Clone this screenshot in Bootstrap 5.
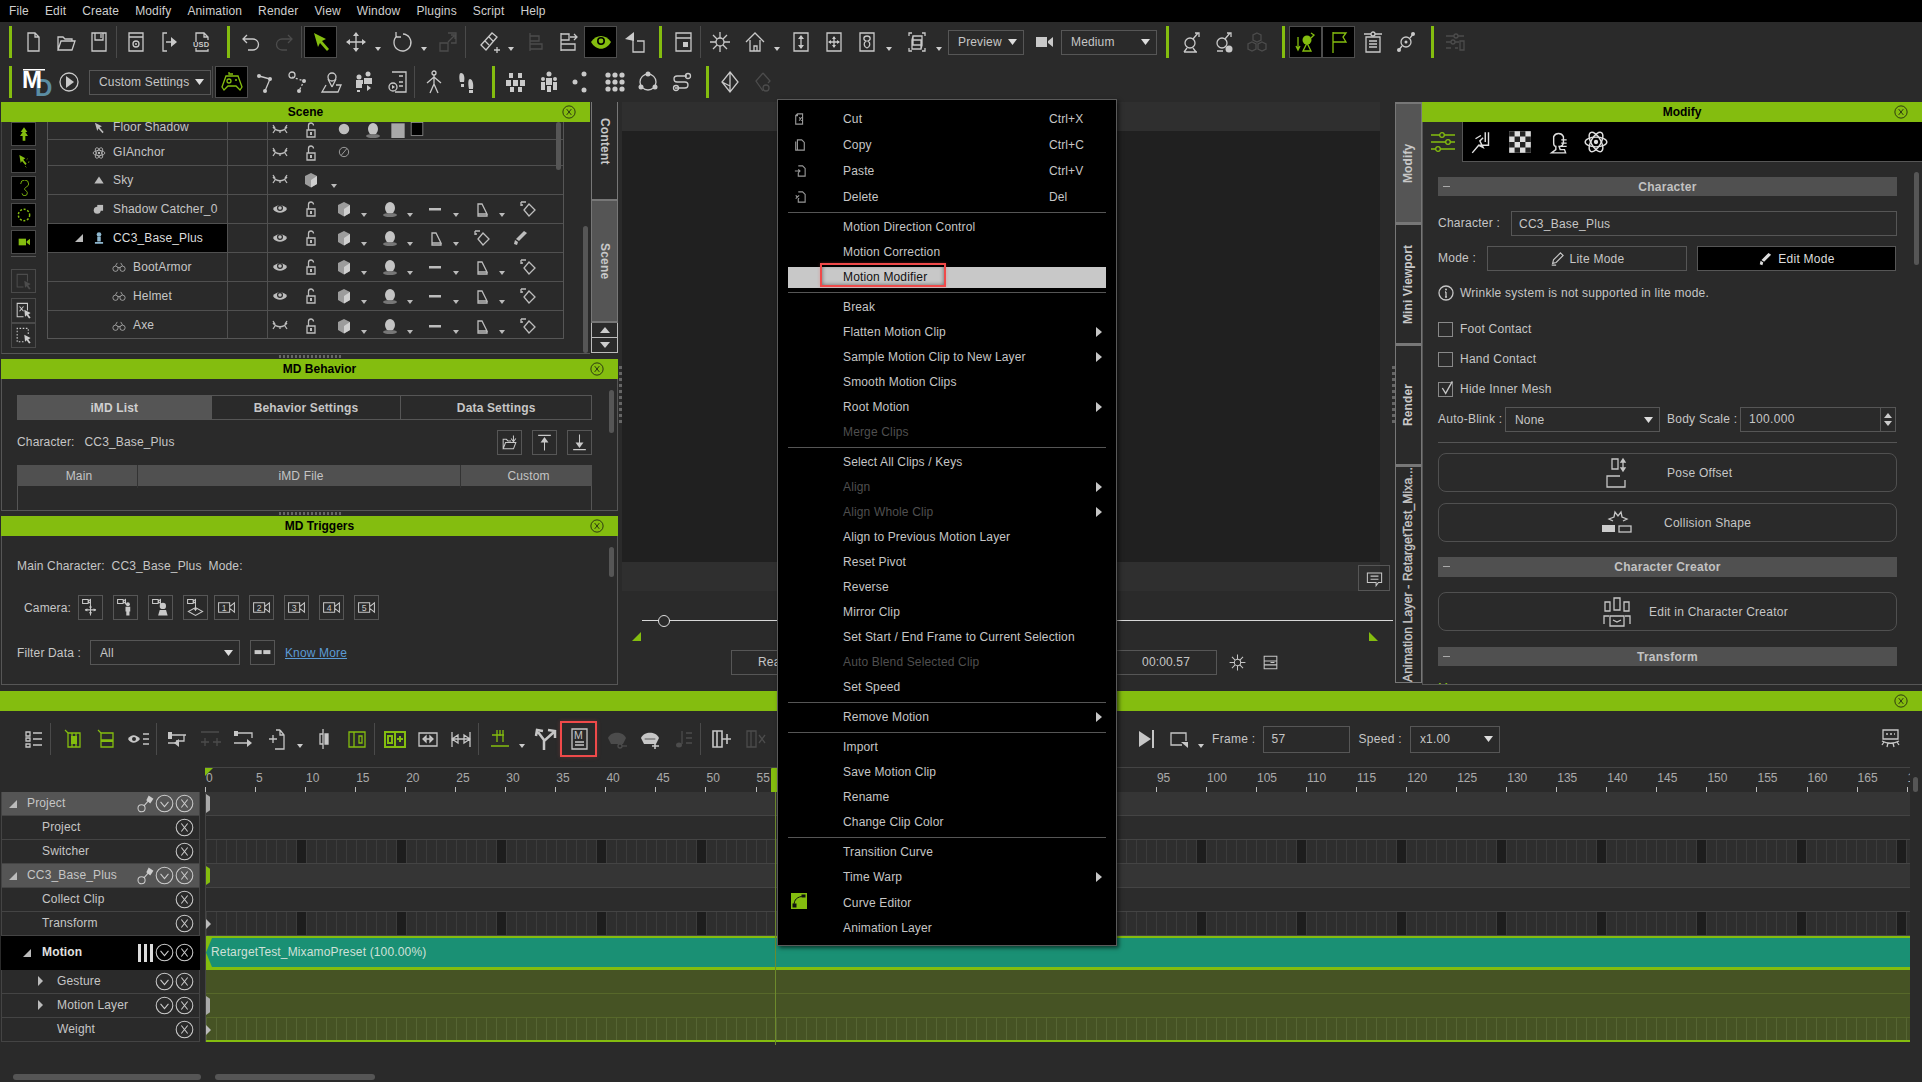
<!DOCTYPE html>
<html lang="en">
<head>
<meta charset="utf-8">
<title>Motion Modifier</title>
<link href="https://cdn.jsdelivr.net/npm/bootstrap@5.3.0/dist/css/bootstrap.min.css" rel="stylesheet">
<style>
:root{--acc:#84bd0f;--txt:#c6c6c6;--ln:#565656;--pane:#2a2a2a}
html,body{margin:0;height:1082px;overflow:hidden}
body{width:1922px;background:var(--pane);color:var(--txt);font:12px/1.2 "Liberation Sans",Arial,sans-serif;letter-spacing:.15px;position:relative}
.ic{width:24px;height:24px;fill:none;stroke:currentColor;stroke-width:1.3;display:block}
.ic16{width:16px;height:16px}
.ic14{width:14px;height:14px}
.ic18{width:19px;height:19px}
.fl{fill:currentColor;stroke:none}
.appmenu{height:22px;background:#000;padding-left:9px;gap:16px;color:#cfcfcf}
.tbar{height:40px;color:#c9c9c9}
.tb{width:33px;height:32px;display:flex;align-items:center;justify-content:center;flex:none}
.tb.act{background:#000;box-shadow:inset 0 0 0 1px #4d4d4d}
.tb.dim{color:#4c4c4c}
.tb.grn{color:var(--acc)}
.gbar{width:3px;height:32px;margin:0 4px 0 9px;background:var(--acc);flex:none}
.vsep{width:1px;height:32px;margin:0 2px 0 1px;background:#4a4a4a;flex:none}
.dr{width:13px;height:32px;flex:none;position:relative}
.dr::after,.tn::after{content:"";position:absolute;left:3px;top:21px;border:3px solid transparent;border-top:4px solid #ccc;border-bottom:0}
.g1{margin-left:1px}.g2{margin-left:2px}.g3{margin-left:3px}.g4{margin-left:4px}.g5{margin-left:5px}
.tsel{height:25px;font-size:12px;line-height:1;padding:0 20px 0 9px;background-color:transparent;color:var(--txt);border:1px solid var(--ln);border-radius:0;background-size:9px 6px;background-position:right 6px center;letter-spacing:.15px;flex:none;
background-image:url("data:image/svg+xml,%3csvg xmlns='http://www.w3.org/2000/svg' viewBox='0 0 9 6'%3e%3cpath fill='%23ddd' d='M0 0h9L4.5 6z'/%3e%3c/svg%3e")}
.w-prev{width:76px;margin-left:2px}.w-med{width:96px;margin-left:1px}.w-cust{width:122px;margin-left:4px}
.logo{width:30px;height:32px;margin-left:6px;flex:none}
.main{height:589px}
.lcol{width:618px;flex:none;padding-left:1px;position:relative}
.ptitle{height:20px;background:var(--acc);color:#000;font-weight:700;padding:1px 0 0 20px;position:relative;flex:none;letter-spacing:0}
.pclose{position:absolute;right:14px;top:3px;color:#111}
.scene{height:252px}
.sleft{width:589px;flex:none}
.sbody{height:232px;position:relative;border-bottom:1px solid var(--ln);border-left:1px solid #444}
.strip{width:45px;padding:0 0 0 9px;flex:none}
.sb{width:25px;height:24px;margin-bottom:3px;background:#000;box-shadow:inset 0 0 0 1px #4a4a4a;color:var(--acc);display:flex;align-items:center;justify-content:center}
.sb.off{background:transparent;color:#ccc;height:25px;margin:0}
.sb.offd{background:transparent;color:#4c4c4c;height:24px;margin:12px 0 5px}
.stripline{height:1px;background:#555;width:25px;margin:-1px 0 12px}
.stable{width:517px;border:solid var(--ln);border-width:0 1px 1px 1px;height:217px;overflow:hidden;flex:none}
.srow{display:grid;grid-template-columns:180px 40px 285px;border-bottom:1px solid #505050}
.srow:last-child{border-bottom:0}
.h26{height:26px}.h29{height:29px}
.srow.h18{height:18px;grid-template-rows:11px;overflow:hidden}
.sname{display:flex;align-items:center;border-right:1px solid #505050;height:100%;position:relative}
.h18 .sname,.h18 .sgap{border-right-color:transparent}
.h18{background:linear-gradient(#505050,#505050) 179px 0/1px 100% no-repeat,linear-gradient(#505050,#505050) 219px 0/1px 100% no-repeat}
.sgap{border-right:1px solid #505050;height:100%}
.sico{position:absolute;left:44px;top:50%;margin-top:-7px;color:#bbb}
.sico.sub{left:64px}
.stxt{margin-left:65px}
.stxt.sub{margin-left:85px}
.sel{background:#000;color:#ddd}
.cccol{color:#8fb8d0}
.fx{display:grid;grid-template-columns:24px 37px 30px 10px 36px 10px 36px 10px 36px 10px 36px;align-items:center;height:100%;color:#bdbdbd}
.fx.fs{grid-template-columns:24px 37px 30px 6px 16px 9px 16px 4px 14px}
.fx>span{display:flex;justify-content:center;position:relative;height:16px}
.fx:not(.fs)>span:nth-child(5),.fx:not(.fs)>span:nth-child(7),.fx:not(.fs)>span:nth-child(9),.fx:not(.fs)>span:nth-child(11){padding-left:5px}
.fx>.jb{justify-content:flex-start}
.tn{width:10px}
.tn::after{left:2px;top:12px;border-top-color:#bbb}
.vtabs{width:27px;flex:none;margin-left:1px}
.vt{writing-mode:vertical-rl;width:27px;font-weight:700;color:#c8c8c8;border:1px solid #777;border-width:0 1px 2px 1px;display:flex;align-items:center;letter-spacing:.2px}
.vt.cont{height:99px;padding-top:16px}
.vt.scn{height:122px;background:#555;justify-content:center;padding-top:0}
.va{height:15px;border:1px solid #bbb;border-top:0;display:flex;align-items:center;justify-content:center}
.va i{border:5px solid transparent;border-top:0;border-bottom:6px solid #ccc;display:block}
.va.dn i{border-bottom:0;border-top:6px solid #ccc}
.split{height:5px;display:flex;justify-content:center;align-items:center}
.split i{width:62px;height:3px;background:repeating-linear-gradient(90deg,#666 0 2px,transparent 2px 4px);display:block}
.dock{border:1px solid var(--ln);border-top:0;position:relative;overflow:hidden;padding:0 0 0 15px;flex:none}
.behav{height:132px}
.trig{height:149px}
.dtabs{width:575px;height:25px;margin-top:16px;display:flex;font-weight:700;border:1px solid var(--ln)}
.dtabs div{display:flex;align-items:center;justify-content:center;border-left:1px solid var(--ln);padding-top:1px}
.dt1{width:193px;background:#555;color:#d0d0d0;border-left:0!important}.dt2{width:190px}.dt3{width:191px}
.sqb{width:25px;height:25px;border:1px solid var(--ln);display:flex;align-items:center;justify-content:center;flex:none;color:#c8c8c8}
.ms10{margin-left:10px}
.charrow{width:575px;height:25px;margin-top:10px}
.cname{margin-left:10px}
.dhead{width:575px;height:21px;margin-top:10px;background:#505050;display:grid;grid-template-columns:120px 323px 1fr;text-align:center;line-height:23px;color:#c4c4c4}
.dhead div{padding-left:4px}
.dhead div+div{border-left:1px solid #333}
.dempty{width:575px;height:40px;border:solid #555;border-width:0 1px}
.sbar{position:absolute;background:#565656;border-radius:3px;width:5px}
.s1{left:554px;top:0;height:48px}.s2{left:581px;top:104px;height:127px}
.s3{left:607px;top:11px;height:43px}.s4{left:607px;top:11px;height:30px}
.s5{left:491px;top:50px;height:93px}.s6{left:1913px;top:86px;height:15px}
.mainch{margin-top:23px}
.camrow{margin-top:22px;height:25px;padding-left:7px}
.camrow .sqb{margin-left:10px}
.camrow .cfirst{margin-left:7px}
.camrow .cm{margin-left:6px}
.filtrow{height:25px;margin-top:20px}
.fsel{width:150px;margin-left:9px}
.tws{margin-left:10px}
.knw{color:#5b9bd5;text-decoration:underline;margin-left:10px}
.imdcut{margin-top:17px}
.cen{flex:1 1 auto;padding-left:4px;min-width:0;position:relative}
.vtop{height:29px;width:758px;background:#2f2f2f;flex:none}
.vport{height:431px;width:758px;background:#202020;flex:none}
.vband{height:29px;width:758px;background:#2f2f2f;flex:none;padding-top:3px}
.vband .sqb{width:32px;height:26px;margin-left:auto;margin-right:-10px}
.slid{height:100px;position:relative}
.cline{position:absolute;left:20px;right:2px;top:29px;height:1px;background:#d8d8d8}
.cknob{position:absolute;left:36px;top:24px;width:12px;height:12px;border:1px solid #ddd;border-radius:50%;background:#2a2a2a}
.ctrA,.ctrB{position:absolute;top:41px;width:9px;height:9px;background:var(--acc)}
.ctrA{left:10px;clip-path:polygon(100% 0,100% 100%,0 100%)}
.ctrB{left:747px;clip-path:polygon(0 0,100% 100%,0 100%)}
.crea{position:absolute;left:109px;top:59px;width:100px;height:25px;border:1px solid var(--ln);line-height:23px;padding-left:26px}
.ctime{position:absolute;left:490px;top:59px;width:105px;height:25px;border:1px solid var(--ln);line-height:23px;text-align:right;padding-right:26px;border-left:0}
.cicA{position:absolute;left:606px;top:62px}
.cicB{position:absolute;left:639px;top:62px}
.vdots{position:absolute;width:3px;height:57px;top:264px;background:repeating-linear-gradient(#666 0 3px,transparent 3px 6px)}
.vd1{left:1px}.vd2{left:774px}
.rcol{width:527px;flex:none;position:relative}
.rtabs{width:27px;flex:none}
.rt{writing-mode:vertical-rl;transform:rotate(180deg);width:27px;font-weight:700;border:1px solid #777;display:flex;align-items:center;justify-content:center;color:#c8c8c8;height:121px;border-width:1px 1px 2px 1px;white-space:nowrap;overflow:hidden;letter-spacing:.1px}
.rt.on{background:#555}
.rt.anim{height:218px;justify-content:flex-start;font-weight:400;-webkit-text-stroke:.35px #c8c8c8;letter-spacing:.2px}
.rbody{width:500px;flex:none}
.rpanel{height:563px;border:solid var(--ln);border-width:0 0 1px 1px;position:relative;overflow:hidden}
.rtool{height:40px}
.rtact{width:39px;height:40px;display:flex;align-items:center;justify-content:center;color:var(--acc);flex:none}
.rtb{flex:1;background:#000;border:solid var(--ln);border-width:0 0 1px 1px;display:flex;align-items:center}
.rtb .tb{width:38px;color:#e0e0e0}
.rtb .ic{width:26px;height:26px}
.rcont{padding:15px 25px 0 15px}
.sech{height:19px;background:#505050;font-weight:700;color:#c2c2c2;position:relative;display:flex;align-items:center;justify-content:center;letter-spacing:.25px;padding-top:1px}
.sech.tall{height:20px}
.sech i{position:absolute;left:5px;top:9px;width:7px;height:1px;background:#aaa}
.fctl{height:25px;background:transparent;border:1px solid var(--ln);border-radius:0;color:var(--txt);font-size:12px;padding:0 7px;letter-spacing:.25px;flex:1;min-width:0}
.fctl:focus{background:transparent;color:var(--txt)}
.rrow{height:25px;margin-top:15px}
.rrow.r10{margin-top:10px}
.rrow.r3{margin-top:3px}
.r73{width:73px;flex:none}.r49{width:49px;flex:none}.r67{width:67px;flex:none}
.absel{width:155px}
.bsl{width:73px;margin-left:7px;flex:none}
.lab{letter-spacing:.25px;white-space:nowrap}
.modeb{height:25px;width:200px;border:1px solid var(--ln);border-radius:0;color:var(--txt);font-size:12px;padding:0;display:flex;align-items:center;justify-content:center;gap:6px;letter-spacing:.25px}
.modeb.on{background:#000;color:#ddd;width:199px;margin-left:10px}
.ckwrap{margin-top:9px}
.ckline{height:30px;letter-spacing:.25px}
.ckbox{width:15px;height:15px;border:1px solid #888;margin:0 7px 0 0;background:transparent;border-radius:0;flex:none;position:relative}
.ckbox svg{position:absolute;left:0;top:-3px}
.inforow{margin-top:10px;height:24px;gap:6px;letter-spacing:.25px}
.spin{width:15px;height:23px;border-left:1px solid var(--ln);display:flex;flex-direction:column;align-items:center;justify-content:space-around;padding:3px 0}
.spin i{border:4px solid transparent;border-top:0;border-bottom:5px solid #ccc;display:block}
.spin i+i{border-bottom:0;border-top:5px solid #ccc}
.spinwrap{width:156px;height:25px;border:1px solid var(--ln);flex:none}
.spinwrap span{flex:1;padding-left:8px;letter-spacing:.35px}
.hr1{height:1px;background:#555;margin:10px 0}
.bigb{height:39px;border:1px solid #505050;border-radius:8px;color:var(--txt);font-size:12px;padding:0 0 0 162px;display:flex;align-items:center;justify-content:flex-start;letter-spacing:.25px;width:100%}
.bigb svg{width:32px;height:32px}
.gp34{margin-right:34px}.gp31{margin-right:31px}.gp16{margin-right:16px}
.mt11{margin-top:11px}.mt15{margin-top:15px}.mt16{margin-top:16px}
.gt{color:var(--acc)}
.bottom{height:391px;position:relative}
.btool{height:56px}
.b0{width:16px;flex:none}
.hlb{outline:2px solid #f04a4a;box-shadow:0 0 4px 2px rgba(240,74,74,.25);height:32px}
.midg{margin-left:357px}
.bsel{width:90px;height:27px}
.binp{width:87px;height:27px;flex:none;padding-left:7px}
.blab{letter-spacing:.3px}
.ruler{height:25px;margin-left:205px;border-top:1px solid #444;display:flex;overflow:hidden;position:relative;width:1705px}
.tick{width:50.05px;flex:none;padding:3px 0 0 1px;color:#aaa;background:linear-gradient(#bbb,#bbb) left bottom/1px 5px no-repeat;letter-spacing:0;line-height:14px}
.phead{position:absolute;left:566px;top:0;width:7px;height:25px;background:var(--acc);border-radius:1px}
.zero{position:absolute;left:0;top:0;width:8px;height:8px;background:var(--acc);clip-path:polygon(0 0,100% 0,0 100%)}
.tl{position:relative}
.labs{width:199px;flex:none;margin-left:1px}
.lr{height:24px;border:1px solid #444;border-width:0 1px 1px 1px;display:flex;align-items:center;position:relative;white-space:nowrap}
.lr.hd{background:#555}
.lr.mot{height:34px;background:#000;color:#e0e0e0;font-weight:700;border-color:#000}
.lr .t1{margin-left:25px}.lr .t2{margin-left:40px}.lr .t3{margin-left:55px}
.lri{position:absolute;display:block;color:#ccc}
.rA{right:5px;top:2px}.rB{right:25px;top:2px}.rC{right:44px;top:2px}
.mot .rA,.mot .rB{top:7px}
.tr3{position:absolute;width:8px;height:8px;background:#bbb;clip-path:polygon(100% 0,100% 100%,0 100%)}
.tA{left:7px;top:8px}.tB{left:21px;top:13px}
.trs{left:27px;top:10px}
.trR{position:absolute;border:5px solid transparent;border-left:5px solid #bbb;border-right:0}
.tC{left:36px;top:6px}.tD{left:0;top:7px}
.bars{position:absolute;left:136px;top:8px;width:16px;height:18px;background:repeating-linear-gradient(90deg,#ddd 0 3px,transparent 3px 6px)}
.tracks{width:1705px;margin-left:5px;flex:none;border-left:1px solid #444}
.tk{height:24px;border-bottom:1px solid #444;position:relative}
.tk.l{background:#353535}
.tk.m{background:#2c2c2c}
.tk.g{background-image:repeating-linear-gradient(90deg,#3c3c3c 0 1px,transparent 1px 10px),repeating-linear-gradient(90deg,transparent 0 90px,#1d1d1d 90px 100px);background-color:#2e2e2e}
.tk.clip{height:34px;background:var(--acc);padding:2px 0 3px;border:0}
.cinner{height:29px;background:#1a9074;color:#cfe0d8;line-height:29px;padding-left:5px;clip-path:polygon(6px 0,100% 0,100% 100%,6px 100%,0 50%)}
.tk.ol{background:#465324;border-bottom:1px solid #57682a}
.tk.wg{background-color:#465324;background-image:repeating-linear-gradient(90deg,#566534 0 1px,transparent 1px 10px);border-bottom:2px solid var(--acc)}
.mk{position:absolute;left:0;top:2px;width:4px;height:19px;background:#aaa;clip-path:polygon(0 0,100% 15%,100% 85%,0 100%)}
.mk.gm{background:var(--acc)}
.playl{position:absolute;left:775px;top:0;width:1px;background:#6d8a2c;height:253px}
.botbar{position:absolute;height:6px;background:#555;border-radius:3px;top:383px}
.bb1{left:13px;width:188px}.bb2{left:215px;width:160px}
.ctx.dropdown-menu{position:absolute;left:777px;top:99px;width:340px;height:847px;background:#000;border:1px solid #5a5a5a;border-radius:0;padding:6px 10px 0 10px;z-index:5;box-shadow:2px 2px 4px rgba(0,0,0,.6);display:block;margin:0;min-width:0;font-size:12px}
.ctx .dropdown-item{height:25px;padding:0 0 0 55px;color:#c6c6c6;display:flex;align-items:center;position:relative;font-size:12px;letter-spacing:.15px;background:transparent;white-space:nowrap}
.ctx .i26{height:26px}
.ctx .dropdown-item.off{color:#4f4f4f}
.ctx .dropdown-item.sub::after{content:"";position:absolute;right:4px;top:7px;border:5px solid transparent;border-left:6px solid #c6c6c6;border-right:0}
.ctx .dropdown-divider{border-top:1px solid #555;margin:2px 0;opacity:1}
.ctx .ks{position:absolute;left:261px;letter-spacing:.1px}
.ctx .ci{position:absolute;left:6px;top:7px;width:12px;height:12px;color:#999}
.ctx .dropdown-item.hi{background:linear-gradient(#c8c8c8,#c8c8c8) center/100% 21px no-repeat;color:#111}
.ctx .redb{position:absolute;left:32px;top:-2px;width:126px;height:24px;border:2px solid #f04a4a;box-shadow:inset 0 0 4px rgba(0,0,0,.5),0 0 3px rgba(240,74,74,.3)}
.cvb{position:absolute;left:3px;top:3px;width:16px;height:16px;background:var(--acc);color:#111}
</style>
</head>
<body>
<svg width="0" height="0" class="position-absolute">
<symbol id="n" viewBox="0 0 24 24"><path d="M7 3h7l4 4v14H7zM14 3v4h4"/></symbol>
<symbol id="o" viewBox="0 0 24 24"><path d="M4 20V7h5l2 2h7v2M4 20l3-9h14l-3 9z"/></symbol>
<symbol id="s" viewBox="0 0 24 24"><path d="M5 3h14v18H5zM8 3v7h8V3M14 4v4"/></symbol>
<symbol id="p" viewBox="0 0 24 24"><path d="M5 3h14v18H5zM5 7h14"/><circle cx="12" cy="14" r="3"/><circle cx="12" cy="14" r="1" class="fl"/></symbol>
<symbol id="i" viewBox="0 0 24 24"><path d="M10 3H6v18h4M9 12h6"/><path d="M14 7l6 5-6 5z" class="fl"/></symbol>
<symbol id="und" viewBox="0 0 24 24"><path d="M8 5l-4 4 4 4M4 9h10a5 5 0 0 1 0 11H9"/></symbol>
<symbol id="red" viewBox="0 0 24 24"><path d="M16 5l4 4-4 4M20 9H10a5 5 0 0 0 0 11h5"/></symbol>
<symbol id="arw" viewBox="0 0 24 24"><path d="M5 3l12 6-4 2 7 8-2 2-7-8-2 4z" class="fl"/></symbol>
<symbol id="mov" viewBox="0 0 24 24"><path d="M12 3v18M3 12h18"/><path d="M12 2l-3 4h6zM12 22l-3-4h6zM2 12l4-3v6zM22 12l-4-3v6z" class="fl"/></symbol>
<symbol id="rot" viewBox="0 0 24 24"><path d="M7 6a8.500 8.500 0 1 0 6-2M6 2v5h5"/></symbol>
<symbol id="scl" viewBox="0 0 24 24"><path d="M12 3h8v10h-5M4 13h8v8H4zM12 12l6-6M15 5h4v4"/></symbol>
<symbol id="snp" viewBox="0 0 24 24"><path d="M4 15L15 3l5 4L9 20zM8 11l4 4M12 7l4 4M17 20h6M20 17v6"/></symbol>
<symbol id="al1" viewBox="0 0 24 24"><path d="M7 3v18M7 6h9v5H7zM7 14h12v5H7z"/></symbol>
<symbol id="al2" viewBox="0 0 24 24"><path d="M5 3v18M5 4h8v6H5zM5 14h14v6H5zM14 7h7M18 4l3 3-3 3"/></symbol>
<symbol id="eye" viewBox="0 0 24 24"><path d="M2 12c5-8 15-8 20 0-5 9-15 9-20 0z" class="fl"/><circle cx="12" cy="11" r="4" fill="#000" stroke="none"/><circle cx="12" cy="11" r="2.400" class="fl"/></symbol>
<symbol id="rig" viewBox="0 0 24 24"><path d="M11 8v14h11V11H15"/><path d="M3 9l9-7v9z" class="fl"/></symbol>
<symbol id="win" viewBox="0 0 24 24"><path d="M5 3h15v18H5zM5 8h15"/><rect x="12" y="12" width="5" height="5" class="fl"/></symbol>
<symbol id="sun" viewBox="0 0 24 24"><circle cx="12" cy="12" r="4"/><path d="M12 2v6M12 16v6M2 12h6M16 12h6M5 5l4 4M15 15l4 4M19 5l-4 4M9 15l-4 4"/></symbol>
<symbol id="hom" viewBox="0 0 24 24"><path d="M3 12l9-9 9 9M7 10v11h10V10M11 21v-5h3v5"/></symbol>
<symbol id="fv1" viewBox="0 0 24 24"><path d="M5 3h14v18H5zM12 6v12"/><path d="M12 5l-3 4h6zM12 19l-3-4h6z" class="fl"/></symbol>
<symbol id="fv2" viewBox="0 0 24 24"><path d="M5 3h14v18H5zM12 7v10M7 12h10"/><path d="M12 6l-2 3h4zM12 18l-2-3h4zM6 12l3-2v4zM18 12l-3-2v4z" class="fl"/></symbol>
<symbol id="fv3" viewBox="0 0 24 24"><path d="M5 3h14v18H5zM12 6c4 0 4 4 1 5 3 2 2 6-1 7-3-1-4-5-1-7-3-1-3-5 1-5z"/></symbol>
<symbol id="fv4" viewBox="0 0 24 24"><path d="M7 3H4v3M17 3h3v3M7 21H4v-3M17 21h3v-3M8 6h9v9H8zM8 6l-1 4v9h9l1-4M7 10h9v9"/></symbol>
<symbol id="cam" viewBox="0 0 24 24"><path d="M4 7h11v10H4z" class="fl"/><path d="M16 11l5-4v10l-5-4z" class="fl"/></symbol>
<symbol id="bn1" viewBox="0 0 24 24"><circle cx="11" cy="13" r="5"/><path d="M5 22h13M8 18l-3 4M14 18l3 4M14 9l5-6M16 3h4v4"/></symbol>
<symbol id="bn2" viewBox="0 0 24 24"><circle cx="10" cy="13" r="5"/><path d="M5 21h6M13 9l5-6M15 3h4v4"/><circle cx="17" cy="19" r="3.500" class="fl"/></symbol>
<symbol id="cb3" viewBox="0 0 24 24"><path d="M12 3l4 2v5l-4 2-4-2V5zM7 12l4 2v5l-4 2-4-2v-5zM17 12l4 2v5l-4 2-4-2v-5z"/></symbol>
<symbol id="grv" viewBox="0 0 24 24"><circle cx="13" cy="10" r="4.500" class="fl"/><path d="M4 7v12M2 16l2 4 2-4M9 21l4-8 4 8zM17 3l3 2-3 3"/></symbol>
<symbol id="tree" viewBox="0 0 24 24"><path d="M12 2l5 7h-3l4 6h-4v7h-4v-7H6l4-6H7z" class="fl"/></symbol>
<symbol id="sp1" viewBox="0 0 24 24"><path d="M5 3l9 5-3 2 5 6-2 2-5-6-2 3z" class="fl"/><path d="M16 10l2-2M18 14l3-1M14 20l2 2" stroke-dasharray="2 1"/></symbol>
<symbol id="sp2" viewBox="0 0 24 24"><path d="M7 6a6 6 0 0 1 12 0c0 4-5 4-6 7s4 3 4 6a4 4 0 0 1-8 1"/></symbol>
<symbol id="sp3" viewBox="0 0 24 24"><circle cx="12" cy="12" r="8.500" stroke-dasharray="3 2.500" stroke-width="2.200"/></symbol>
<symbol id="bx1" viewBox="0 0 24 24"><path d="M12 19H4V3h13v9"/><path d="M13 11l8 4-3 2 3 4-2 1-3-4-2 2z" class="fl"/></symbol>
<symbol id="bx2" viewBox="0 0 24 24"><path d="M12 20H4V3h13v9M7 7l5 6M12 7l-5 6"/><path d="M13 11l8 4-3 2 3 4-2 1-3-4-2 2z" class="fl"/></symbol>
<symbol id="bx3" viewBox="0 0 24 24"><path d="M12 20H4V3h14v9" stroke-dasharray="2 2"/><path d="M13 11l8 4-3 2 3 4-2 1-3-4-2 2z" class="fl"/></symbol>
<symbol id="flg" viewBox="0 0 24 24"><path d="M6 2v21M6 3h13l-3 4 3 5H6"/></symbol>
<symbol id="lst" viewBox="0 0 24 24"><path d="M5 7h14v15H5zM8 11h8M8 14h8M8 17h8"/><circle cx="12" cy="4" r="2"/><path d="M3 4h7M14 4h7"/></symbol>
<symbol id="bon" viewBox="0 0 24 24"><circle cx="12" cy="12" r="5"/><circle cx="12" cy="12" r="1.500" class="fl"/><path d="M8 16l-4 5M16 8l4-5"/><circle cx="19" cy="4" r="2" class="fl"/><circle cx="5" cy="20" r="2" class="fl"/></symbol>
<symbol id="eqc" viewBox="0 0 24 24"><path d="M3 6h8M15 6h6M3 12h5M12 12h4M3 18h5M12 18h3"/><circle cx="13" cy="6" r="2"/><circle cx="10" cy="12" r="2"/><path d="M17 11h4v9h-4z"/></symbol>
<symbol id="play" viewBox="0 0 24 24"><circle cx="12" cy="12" r="9"/><path d="M9 6l8 6-8 6z" class="fl"/></symbol>
<symbol id="pad" viewBox="0 0 24 24"><path d="M6 6h12l4 11-2 3-4-4H8l-4 4-2-3z"/><circle cx="9" cy="11" r="2"/><circle cx="16" cy="10" r="1" class="fl"/><path d="M9 2v2h4"/></symbol>
<symbol id="pth" viewBox="0 0 24 24"><path d="M6 6l11 3-5 12"/><circle cx="6" cy="6" r="2" class="fl"/><circle cx="17" cy="9" r="2" class="fl"/><circle cx="12" cy="21" r="2" class="fl"/></symbol>
<symbol id="pt2" viewBox="0 0 24 24"><path d="M6 7l12 4-5 10" stroke-dasharray="2 2"/><circle cx="6" cy="5" r="3"/><circle cx="18" cy="11" r="2" class="fl"/><circle cx="13" cy="21" r="2" class="fl"/></symbol>
<symbol id="pin" viewBox="0 0 24 24"><circle cx="13" cy="7" r="4"/><path d="M13 17L9 9M13 17l4-8M7 15l-4 7h16l3-7h-5"/></symbol>
<symbol id="ppl" viewBox="0 0 24 24"><circle cx="16" cy="4" r="2.500" class="fl"/><path d="M12 8h8v6h-8zM4 10h7v4H4zM9 18h9M15 15l4 3-4 3z" class="fl"/><circle cx="7" cy="7" r="2.500" class="fl"/><path d="M4 14h6v4H4zM5 20h3v2H5z" class="fl"/></symbol>
<symbol id="scr" viewBox="0 0 24 24"><path d="M7 2h14v20H10M14 6h4M14 12h4M14 16h4"/><circle cx="8" cy="17" r="4"/><path d="M7 15l3 2-3 2z" class="fl"/></symbol>
<symbol id="man" viewBox="0 0 24 24"><circle cx="12" cy="3" r="2"/><path d="M12 5v9M12 7L5 13M12 7l7 6M12 14l-4 9M12 14l4 9"/></symbol>
<symbol id="ft" viewBox="0 0 24 24"><path d="M6 3c3 0 4 4 3 9H5C4 8 4 3 6 3zM15 9c2 0 4 4 3 10h-4c-1-5-1-10 1-10zM6 14h3v3H6zM14 20h4v3h-4z" class="fl"/></symbol>
<symbol id="grp" viewBox="0 0 24 24"><path d="M5 3h4v5H5zM14 3h4v5h-4zM2 10h5v6H2zM9 10h5v6H9zM16 10h5v6h-5zM6 17h4v5H6zM14 17h4v5h-4z" class="fl"/></symbol>
<symbol id="gr2" viewBox="0 0 24 24"><circle cx="12" cy="4" r="2.500" class="fl"/><path d="M9 8h6v7H9zM10 16h4v6h-4z" class="fl"/><circle cx="6" cy="9" r="2" class="fl"/><circle cx="18" cy="9" r="2" class="fl"/><path d="M4 12h4v8H4zM16 12h4v8h-4z" class="fl"/></symbol>
<symbol id="dts" viewBox="0 0 24 24"><circle cx="14" cy="4" r="2.500" class="fl"/><circle cx="5" cy="12" r="2.500" class="fl"/><circle cx="14" cy="20" r="2.500" class="fl"/></symbol>
<symbol id="grd" viewBox="0 0 24 24"><g class="fl"><circle cx="5" cy="5" r="2.600"/><circle cx="12" cy="5" r="2.600"/><circle cx="19" cy="5" r="2.600"/><circle cx="5" cy="12" r="2.600"/><circle cx="12" cy="12" r="2.600"/><circle cx="19" cy="12" r="2.600"/><circle cx="5" cy="19" r="2.600"/><circle cx="12" cy="19" r="2.600"/><circle cx="19" cy="19" r="2.600"/></g></symbol>
<symbol id="rng" viewBox="0 0 24 24"><circle cx="12" cy="12" r="8"/><circle cx="12" cy="4" r="2.500" class="fl"/><circle cx="5" cy="17" r="2.500" class="fl"/><circle cx="19" cy="17" r="2.500" class="fl"/></symbol>
<symbol id="flo" viewBox="0 0 24 24"><path d="M8 6h10M8 6a3 3 0 0 0 0 6h8a3 3 0 0 1 0 6H6"/><circle cx="7" cy="18" r="2.500"/><circle cx="19" cy="6" r="2.500"/></symbol>
<symbol id="dia" viewBox="0 0 24 24"><path d="M12 2l8 10-8 10-8-10zM12 2v20M4 12l8 4"/></symbol>
<symbol id="dia2" viewBox="0 0 24 24"><path d="M12 3l7 8-2 2M12 3l-7 8 7 10"/><circle cx="15" cy="18" r="3"/></symbol>
<symbol id="xc" viewBox="0 0 24 24"><circle cx="12" cy="12" r="10.500"/><path d="M8 7l8 10M16 7L8 17"/></symbol>
<symbol id="vc" viewBox="0 0 24 24"><circle cx="12" cy="12" r="10.500"/><path d="M7 10l5 6 5-6"/></symbol>
<symbol id="key" viewBox="0 0 24 24"><circle cx="7" cy="18" r="4.500"/><path d="M10 15l7-8"/><path d="M16 2l6 4-4 6-5-4z" class="fl"/></symbol>
<symbol id="eo" viewBox="0 0 16 16"><path d="M1 8c3-5 11-5 14 0-3 5-11 5-14 0z" class="fl"/><circle cx="8" cy="7" r="3" fill="#2a2a2a" stroke="none"/><circle cx="8" cy="7" r="1.800" class="fl"/></symbol>
<symbol id="ec" viewBox="0 0 16 16"><path d="M1 5c4 5 10 5 14 0M3 8L1 11M13 8l2 3M1 3l2 3M15 3l-2 3M8 9v2"/></symbol>
<symbol id="lk" viewBox="0 0 16 16"><path d="M4 8h8v7H4zM5.500 8V3.500a2.500 2.500 0 0 1 5 0"/><rect x="7" y="10" width="2" height="3" class="fl"/></symbol>
<symbol id="cu" viewBox="0 0 16 16"><path d="M8 1l6 3v8l-6 3.500-6-3.500V4z" fill="#9c9c9c" stroke="none"/><path d="M8 8l6-4v8l-6 3.500z" fill="#cfcfcf" stroke="none"/></symbol>
<symbol id="bu" viewBox="0 0 16 16"><ellipse cx="8" cy="7" rx="5" ry="6" fill="#c4c4c4" stroke="none"/><ellipse cx="8" cy="14" rx="7" ry="2" fill="#777" stroke="none"/></symbol>
<symbol id="da" viewBox="0 0 16 16"><rect x="1" y="7" width="12" height="2.500" class="fl"/></symbol>
<symbol id="sh" viewBox="0 0 16 16"><path d="M4 3h4l5 10H4zM4 13v2h9v-2"/></symbol>
<symbol id="tg" viewBox="0 0 16 16"><path d="M9 3l6 6-6 6-5-6zM1 1h5M1 4h2M1 1v4"/></symbol>
<symbol id="br" viewBox="0 0 16 16"><path d="M12 1l3 2-8 8-3-2zM3 10l3 2-1 3-3-1z" class="fl"/></symbol>
<symbol id="co" viewBox="0 0 14 14"><path d="M4 1h6v12H2V3zM4 1v2H2M6 5l3 4M9 5L6 9"/></symbol>
<symbol id="cof" viewBox="0 0 14 14"><path d="M4 1h5l3 3v9H4zM2 3v10h2"/></symbol>
<symbol id="pas" viewBox="0 0 14 14"><path d="M5 1h5l3 3v9H5V9M1 7h6M5 5l2 2-2 2"/></symbol>
<symbol id="del" viewBox="0 0 14 14"><path d="M5 1h5l3 3v9H5V9M2 5l4 4M6 5L2 9"/></symbol>
<symbol id="lst2" viewBox="0 0 24 24"><path d="M5 5h4v4H5zM5 11h4v3H5zM5 17h4v3H5zM12 6h9M12 12h9M12 18h9"/></symbol>
<symbol id="t1" viewBox="0 0 24 24"><path d="M7 6h12v14H7zM11 6v14M15 6v14"/><rect x="10" y="9" width="6" height="8" class="fl"/><path d="M4 3l3 3"/></symbol>
<symbol id="t2" viewBox="0 0 24 24"><path d="M7 6h12v14H7zM7 13h12"/><rect x="7" y="13" width="12" height="2" class="fl"/><path d="M4 3l3 3"/></symbol>
<symbol id="t3" viewBox="0 0 24 24"><path d="M1 12c3-5 8-5 12 0-4 5-9 5-12 0z" class="fl"/><circle cx="7" cy="12" r="2" fill="#2a2a2a" stroke="none"/><path d="M16 7h6M16 12h6M16 17h6"/></symbol>
<symbol id="k1" viewBox="0 0 24 24"><path d="M3 8h18M19 8v6h-8M3 16h8"/><path d="M14 12l-5 4 5 4zM3 5h4v7H3z" class="fl"/></symbol>
<symbol id="k2" viewBox="0 0 24 24"><path d="M3 5h18M3 15h8M7 11v8M15 15h8M19 11v8"/></symbol>
<symbol id="k3" viewBox="0 0 24 24"><path d="M3 6h18v5M3 16h14"/><path d="M16 12l5 4-5 4zM3 4h4v5H3z" class="fl"/></symbol>
<symbol id="k4" viewBox="0 0 24 24"><path d="M14 3H10M14 3l4 5v14H9M14 3v5h4M3 12h8M7 8v8"/></symbol>
<symbol id="k5" viewBox="0 0 24 24"><path d="M8 7h3v10H8zM13 7h3v10h-3zM11 2v20"/><rect x="13" y="7" width="3" height="10" class="fl"/></symbol>
<symbol id="k6" viewBox="0 0 24 24"><path d="M4 5h16v15H4zM9 5v15M14 9h3v7h-3z"/></symbol>
<symbol id="k7" viewBox="0 0 24 24"><path d="M2 5h20v15H2zM12 5v15M14 12h6M17 9v6M5 9h4v7H5z" stroke-width="2"/></symbol>
<symbol id="k8" viewBox="0 0 24 24"><path d="M3 6h18v13H3zM7 12h10M7 12l3-3v6zM17 12l-3-3v6z"/></symbol>
<symbol id="k9" viewBox="0 0 24 24"><path d="M3 5v15M21 5v15M3 12h18M3 12l6-4v8zM21 12l-6-4v8z"/></symbol>
<symbol id="m1" viewBox="0 0 24 24"><path d="M3 19h18M9 3v12M15 3v12M4 8h12M12 3v6M9 8h6"/></symbol>
<symbol id="m2" viewBox="0 0 24 24"><path d="M10 23V13L4 5M2 9l1-6 6 1M10 14l10-9M14 3l7 1v7" stroke-width="2.500"/></symbol>
<symbol id="m4" viewBox="0 0 24 24"><path d="M3 11c3-7 15-7 18 0l-3 6H6z" class="fl"/><circle cx="15" cy="19" r="2"/><path d="M17 19h5"/></symbol>
<symbol id="m5" viewBox="0 0 24 24"><path d="M3 11c3-7 15-7 18 0l-3 6H6z" class="fl"/><rect x="6" y="11" width="12" height="2" fill="#2a2a2a"/><path d="M17 15v7M14 19h7" stroke-width="1.600"/></symbol>
<symbol id="m6" viewBox="0 0 24 24"><path d="M11 4v13M15 6h6M15 11h6M15 16h6"/><ellipse cx="8" cy="18" rx="3" ry="2.500" class="fl"/></symbol>
<symbol id="m7" viewBox="0 0 24 24"><path d="M3 4h9v16H3zM7 4v16M12 12h9M17 7v10" stroke-width="1.600"/></symbol>
<symbol id="m8" viewBox="0 0 24 24"><path d="M3 4h9v16H3zM7 4v16M15 8l6 8M21 8l-6 8"/></symbol>
<symbol id="nxt" viewBox="0 0 24 24"><path d="M5 4l12 8-12 8z" class="fl"/><path d="M19 3v18" stroke-width="2"/></symbol>
<symbol id="lop" viewBox="0 0 24 24"><path d="M15 18H4V6h15v8"/><path d="M14 15h7v6z" class="fl"/></symbol>
<symbol id="lsh" viewBox="0 0 24 24"><path d="M5 3h15v9H5zM8 7h2M12 7h2M16 7h1M6 15l-2 3M10 16l-1 4M15 16l1 4M19 15l2 3M4 14c5 3 12 3 17 0"/></symbol>
<symbol id="run" viewBox="0 0 24 24"><path d="M18 3v12H9M3 22l6-7 4 2-3-6 3-3M6 9l5-3M15 3v9"/></symbol>
<symbol id="chk" viewBox="0 0 24 24"><rect x="2" y="2" width="20" height="20" fill="#ddd" stroke="none"/><path d="M2 2h5v5H2zM12 2h5v5h-5zM7 7h5v5H7zM17 7h5v5h-5zM2 12h5v5H2zM12 12h5v5h-5zM7 17h5v5H7zM17 17h5v5h-5z" fill="#222" stroke="none"/></symbol>
<symbol id="hd" viewBox="0 0 24 24"><path d="M6 22h13l-1-3h-4l-1-3c3 0 4-1 4-4V7a5 5 0 0 0-9 0v6c0 2 1 3 2 3v3l-4 3zM15 10h5M15 13h5M15 16h5"/></symbol>
<symbol id="atm" viewBox="0 0 24 24"><circle cx="12" cy="12" r="2" class="fl"/><ellipse cx="12" cy="12" rx="10" ry="4.500"/><ellipse cx="12" cy="12" rx="10" ry="4.500" transform="rotate(60 12 12)"/><ellipse cx="12" cy="12" rx="10" ry="4.500" transform="rotate(120 12 12)"/></symbol>
<symbol id="sli" viewBox="0 0 24 24"><path d="M0 5h24M0 12h24M0 19h24"/><circle cx="11" cy="5" r="2.300" fill="#2a2a2a"/><circle cx="17" cy="12" r="2.300" fill="#2a2a2a"/><circle cx="7" cy="19" r="2.300" fill="#2a2a2a"/></symbol>
<symbol id="pen" viewBox="0 0 16 16"><path d="M12 1l3 3-8 8-4 1 1-4zM2 15h5"/></symbol>
<symbol id="inf" viewBox="0 0 16 16"><circle cx="8" cy="8" r="7"/><path d="M8 7v5M7 12h2M7 7h1"/><circle cx="8" cy="4.500" r="1" class="fl"/></symbol>
<symbol id="pos" viewBox="0 0 32 32"><path d="M11 2h6v10h-6zM22 3v10M20 5l2-3 2 3zM20 11l2 3 2-3zM6 25v-6h13M6 20v10h18v-7"/></symbol>
<symbol id="col" viewBox="0 0 32 32"><path d="M12 14l-4-2 5-2 1-5 3 4 3-4 1 5 5 2-4 2"/><rect x="1" y="18" width="13" height="7" fill="#ccc" stroke="none"/><rect x="18" y="19" width="12" height="6"/></symbol>
<symbol id="ccr" viewBox="0 0 32 32"><path d="M4 6h5v9H4zM13 2h6v12h-6zM23 6h5v9h-5zM3 28v-8h5M29 28v-8h-5M9 20h14v10H9zM12 24l4 2 4-2"/></symbol>
<symbol id="imp" viewBox="0 0 24 24"><path d="M4 20V8h4l2 2h4M4 20l3-8h13l-3 8zM17 3v7M14 7l3 4 3-4"/></symbol>
<symbol id="up" viewBox="0 0 24 24"><path d="M4 3h16M12 8v14"/><path d="M12 5l-5 7h10z" class="fl"/></symbol>
<symbol id="dn" viewBox="0 0 24 24"><path d="M4 21h16M12 2v14"/><path d="M12 19l-5-7h10z" class="fl"/></symbol>
<symbol id="c0" viewBox="0 0 24 24"><path d="M2 2h7v5H2zM9 4l3-2v5zM12 8v14M5 15h14"/><path d="M12 9l-2 3h4zM12 21l-2-3h4zM5 15l3-2v4zM19 15l-3-2v4z" class="fl"/></symbol>
<symbol id="c1" viewBox="0 0 24 24"><path d="M2 2h7v5H2zM9 4l3-2v5z"/><circle cx="15" cy="8" r="2.500" class="fl"/><path d="M12 11h6v6h-1v5h-4v-5h-1z" class="fl"/></symbol>
<symbol id="c2" viewBox="0 0 24 24"><path d="M2 2h7v5H2zM9 4l3-2v5z"/><circle cx="15" cy="10" r="4" class="fl"/><path d="M9 22l2-7h8l2 7z" class="fl"/></symbol>
<symbol id="c3" viewBox="0 0 24 24"><path d="M2 2h7v5H2zM9 4l3-2v5zM12 8v8M3 17l9-5 9 5-9 5z"/><path d="M12 16l-3-3h6z" class="fl"/></symbol>
<symbol id="cn" viewBox="0 0 24 24"><path d="M2 6h14v12H2zM16 11l6-5v12l-6-5z"/></symbol>
<symbol id="qcm" viewBox="0 0 24 24"><path d="M3 5h18v12h-4l-3 4v-4H3zM7 9h10M7 13h10"/></symbol>
<symbol id="two" viewBox="0 0 24 24"><rect x="2" y="9" width="9" height="5" class="fl"/><rect x="13" y="9" width="9" height="5" class="fl"/></symbol>
<symbol id="glas" viewBox="0 0 24 24"><circle cx="6" cy="15" r="4.500"/><circle cx="18" cy="15" r="4.500"/><path d="M6 10l3-5M18 10l-3-5M10 13h4"/></symbol>
</svg>

<nav class="appmenu d-flex align-items-center"><span>File</span><span>Edit</span><span>Create</span><span>Modify</span><span>Animation</span><span>Render</span><span>View</span><span>Window</span><span>Plugins</span><span>Script</span><span>Help</span></nav>

<div class="tbar d-flex align-items-center">
<span class="gbar"></span>
<span class="tb"><svg class="ic"><use href="#n"/></svg></span><span class="tb"><svg class="ic"><use href="#o"/></svg></span><span class="tb"><svg class="ic"><use href="#s"/></svg></span><span class="vsep"></span>
<span class="tb"><svg class="ic"><use href="#p"/></svg></span><span class="tb"><svg class="ic"><use href="#i"/></svg></span><span class="tb"><svg class="ic" viewBox="0 0 24 24"><path d="M6 12V3h8l4 4v3M6 18v3h12v-2M14 3v4h4"/><text x="3" y="17" font-size="7.500" font-weight="700" class="fl" font-family="Liberation Sans">USD</text></svg></span>
<span class="gbar"></span>
<span class="tb"><svg class="ic"><use href="#und"/></svg></span><span class="tb dim"><svg class="ic"><use href="#red"/></svg></span><span class="vsep"></span>
<span class="tb act grn"><svg class="ic"><use href="#arw"/></svg></span><span class="tb g2"><svg class="ic"><use href="#mov"/></svg></span><span class="dr"></span><span class="tb"><svg class="ic"><use href="#rot"/></svg></span><span class="dr"></span><span class="tb dim"><svg class="ic"><use href="#scl"/></svg></span><span class="vsep"></span>
<span class="tb g4"><svg class="ic"><use href="#snp"/></svg></span><span class="dr"></span><span class="tb dim"><svg class="ic"><use href="#al1"/></svg></span><span class="tb"><svg class="ic"><use href="#al2"/></svg></span><span class="tb act grn"><svg class="ic"><use href="#eye"/></svg></span><span class="tb"><svg class="ic"><use href="#rig"/></svg></span>
<span class="gbar"></span>
<span class="tb"><svg class="ic"><use href="#win"/></svg></span><span class="vsep"></span>
<span class="tb"><svg class="ic"><use href="#sun"/></svg></span><span class="tb g2"><svg class="ic"><use href="#hom"/></svg></span><span class="dr"></span><span class="tb"><svg class="ic"><use href="#fv1"/></svg></span><span class="tb"><svg class="ic"><use href="#fv2"/></svg></span><span class="tb"><svg class="ic"><use href="#fv3"/></svg></span><span class="dr"></span><span class="tb g4"><svg class="ic"><use href="#fv4"/></svg></span><span class="dr"></span>
<select class="form-select tsel w-prev" aria-label="Render"><option>Preview</option></select>
<span class="tb g3"><svg class="ic"><use href="#cam"/></svg></span>
<select class="form-select tsel w-med" aria-label="Quality"><option>Medium</option></select>
<span class="gbar"></span>
<span class="tb g1"><svg class="ic"><use href="#bn1"/></svg></span><span class="tb"><svg class="ic"><use href="#bn2"/></svg></span><span class="tb dim"><svg class="ic"><use href="#cb3"/></svg></span>
<span class="gbar"></span>
<span class="tb act grn"><svg class="ic"><use href="#grv"/></svg></span><span class="tb act grn"><svg class="ic"><use href="#flg"/></svg></span><span class="tb g1"><svg class="ic"><use href="#lst"/></svg></span><span class="tb"><svg class="ic"><use href="#bon"/></svg></span>
<span class="gbar"></span>
<span class="tb dim"><svg class="ic"><use href="#eqc"/></svg></span>
</div>

<div class="tbar d-flex align-items-center">
<span class="gbar"></span>
<span class="logo"><svg viewBox="0 0 30 32" width="30" height="32" font-family="Liberation Sans" font-weight="700" font-size="24"><text x="13" y="30" fill="#5b8da3">D</text><text x="0" y="22" fill="#fff">M</text><rect x="1" y="3" width="22" height="1.500" fill="#fff"/></svg></span>
<span class="tb"><svg class="ic"><use href="#play"/></svg></span>
<select class="form-select tsel w-cust" aria-label="Settings"><option>Custom Settings</option></select><span class="vsep"></span>
<span class="tb act grn"><svg class="ic"><use href="#pad"/></svg></span><span class="tb"><svg class="ic"><use href="#pth"/></svg></span><span class="tb"><svg class="ic"><use href="#pt2"/></svg></span><span class="tb"><svg class="ic"><use href="#pin"/></svg></span><span class="tb"><svg class="ic"><use href="#ppl"/></svg></span><span class="tb"><svg class="ic"><use href="#scr"/></svg></span><span class="vsep"></span>
<span class="tb"><svg class="ic"><use href="#man"/></svg></span><span class="tb"><svg class="ic"><use href="#ft"/></svg></span>
<span class="gbar"></span>
<span class="tb"><svg class="ic"><use href="#grp"/></svg></span><span class="tb"><svg class="ic"><use href="#gr2"/></svg></span><span class="tb"><svg class="ic"><use href="#dts"/></svg></span><span class="tb"><svg class="ic"><use href="#grd"/></svg></span><span class="tb"><svg class="ic"><use href="#rng"/></svg></span><span class="tb"><svg class="ic"><use href="#flo"/></svg></span>
<span class="gbar"></span>
<span class="tb"><svg class="ic"><use href="#dia"/></svg></span><span class="tb dim"><svg class="ic"><use href="#dia2"/></svg></span>
</div>

<div class="main d-flex">
  <div class="lcol d-flex flex-column">
    <section class="scene d-flex flex-shrink-0">
      <div class="sleft">
        <div class="ptitle d-flex align-items-center justify-content-center">Scene<svg class="ic ic14 pclose"><use href="#xc"/></svg></div>
        <div class="sbody d-flex">
          <div class="strip">
            <div class="sb"><svg class="ic ic16"><use href="#tree"/></svg></div><div class="sb"><svg class="ic ic16"><use href="#sp1"/></svg></div><div class="sb"><svg class="ic ic16"><use href="#sp2"/></svg></div><div class="sb"><svg class="ic ic16"><use href="#sp3"/></svg></div><div class="sb"><svg class="ic ic16"><use href="#cam"/></svg></div>
            <div class="stripline"></div>
            <div class="sb offd"><svg class="ic ic18"><use href="#bx1"/></svg></div><div class="sb off"><svg class="ic ic18"><use href="#bx2"/></svg></div><div class="sb off"><svg class="ic ic18"><use href="#bx3"/></svg></div>
          </div>
          <div class="stable">
            <div class="srow h18"><div class="sname"><svg class="ic ic14 sico"><use href="#arw"/></svg><span class="stxt">Floor Shadow</span></div><div class="sgap"></div><div class="fx fs"><span><svg class="ic ic16"><use href="#ec"/></svg></span><span><svg class="ic ic16"><use href="#lk"/></svg></span><span><svg class="ic ic14" viewBox="0 0 24 24"><circle cx="12" cy="12" r="9" class="fl"/></svg></span><span></span><span><svg class="ic ic16"><use href="#bu"/></svg></span><span></span><span><svg class="ic ic16" viewBox="0 0 24 24"><rect x="2" y="2" width="20" height="22" fill="#a8a8a8" stroke="none"/></svg></span><span></span><span><svg class="ic ic14" viewBox="0 0 24 24"><rect x="2" y="1" width="20" height="22" fill="#000" stroke="#999"/></svg></span></div></div>
            <div class="srow h26"><div class="sname"><svg class="ic ic14 sico"><use href="#atm"/></svg><span class="stxt">GIAnchor</span></div><div class="sgap"></div><div class="fx"><span><svg class="ic ic16"><use href="#ec"/></svg></span><span><svg class="ic ic16"><use href="#lk"/></svg></span><span><svg class="ic ic14" viewBox="0 0 24 24"><circle cx="12" cy="12" r="8"/><path d="M7 18L17 6"/></svg></span></div></div>
            <div class="srow h29"><div class="sname"><svg class="ic ic14 sico" viewBox="0 0 24 24"><path d="M4 18l8-12 8 12z" class="fl"/></svg><span class="stxt">Sky</span></div><div class="sgap"></div><div class="fx"><span><svg class="ic ic16"><use href="#ec"/></svg></span><span><svg class="ic ic16"><use href="#cu"/></svg></span><span class="tn"></span></div></div>
            <div class="srow h29"><div class="sname"><svg class="ic ic14 sico" viewBox="0 0 24 24"><path d="M9 5h10v10H9z" class="fl"/><circle cx="9" cy="14" r="6" class="fl"/></svg><span class="stxt">Shadow Catcher_0</span></div><div class="sgap"></div><div class="fx"><span><svg class="ic ic16"><use href="#eo"/></svg></span><span><svg class="ic ic16"><use href="#lk"/></svg></span><span><svg class="ic ic16"><use href="#cu"/></svg></span><span class="tn"></span><span><svg class="ic ic16"><use href="#bu"/></svg></span><span class="tn"></span><span><svg class="ic ic16"><use href="#da"/></svg></span><span class="tn"></span><span><svg class="ic ic16"><use href="#sh"/></svg></span><span class="tn"></span><span><svg class="ic ic16"><use href="#tg"/></svg></span></div></div>
            <div class="srow h29"><div class="sname sel"><span class="tr3 trs"></span><svg class="ic ic14 sico cccol" viewBox="0 0 24 24"><circle cx="12" cy="6" r="4" class="fl"/><path d="M9 10h6v8H9zM5 19h14v3H5z" class="fl"/></svg><span class="stxt">CC3_Base_Plus</span></div><div class="sgap"></div><div class="fx"><span><svg class="ic ic16"><use href="#eo"/></svg></span><span><svg class="ic ic16"><use href="#lk"/></svg></span><span><svg class="ic ic16"><use href="#cu"/></svg></span><span class="tn"></span><span><svg class="ic ic16"><use href="#bu"/></svg></span><span class="tn"></span><span><svg class="ic ic16"><use href="#sh"/></svg></span><span class="tn"></span><span><svg class="ic ic16"><use href="#tg"/></svg></span><span></span><span class="jb"><svg class="ic ic16"><use href="#br"/></svg></span></div></div>
            <div class="srow h29"><div class="sname"><svg class="ic ic14 sico sub"><use href="#glas"/></svg><span class="stxt sub">BootArmor</span></div><div class="sgap"></div><div class="fx"><span><svg class="ic ic16"><use href="#eo"/></svg></span><span><svg class="ic ic16"><use href="#lk"/></svg></span><span><svg class="ic ic16"><use href="#cu"/></svg></span><span class="tn"></span><span><svg class="ic ic16"><use href="#bu"/></svg></span><span class="tn"></span><span><svg class="ic ic16"><use href="#da"/></svg></span><span class="tn"></span><span><svg class="ic ic16"><use href="#sh"/></svg></span><span class="tn"></span><span><svg class="ic ic16"><use href="#tg"/></svg></span></div></div>
            <div class="srow h29"><div class="sname"><svg class="ic ic14 sico sub"><use href="#glas"/></svg><span class="stxt sub">Helmet</span></div><div class="sgap"></div><div class="fx"><span><svg class="ic ic16"><use href="#eo"/></svg></span><span><svg class="ic ic16"><use href="#lk"/></svg></span><span><svg class="ic ic16"><use href="#cu"/></svg></span><span class="tn"></span><span><svg class="ic ic16"><use href="#bu"/></svg></span><span class="tn"></span><span><svg class="ic ic16"><use href="#da"/></svg></span><span class="tn"></span><span><svg class="ic ic16"><use href="#sh"/></svg></span><span class="tn"></span><span><svg class="ic ic16"><use href="#tg"/></svg></span></div></div>
            <div class="srow h29"><div class="sname"><svg class="ic ic14 sico sub"><use href="#glas"/></svg><span class="stxt sub">Axe</span></div><div class="sgap"></div><div class="fx"><span><svg class="ic ic16"><use href="#ec"/></svg></span><span><svg class="ic ic16"><use href="#lk"/></svg></span><span><svg class="ic ic16"><use href="#cu"/></svg></span><span class="tn"></span><span><svg class="ic ic16"><use href="#bu"/></svg></span><span class="tn"></span><span><svg class="ic ic16"><use href="#da"/></svg></span><span class="tn"></span><span><svg class="ic ic16"><use href="#sh"/></svg></span><span class="tn"></span><span><svg class="ic ic16"><use href="#tg"/></svg></span></div></div>
          </div>
          <span class="sbar s1"></span><span class="sbar s2"></span>
        </div>
      </div>
      <div class="vtabs">
        <div class="vt cont">Content</div>
        <div class="vt scn">Scene</div>
        <div class="va"><i></i></div>
        <div class="va dn"><i></i></div>
      </div>
    </section>
    <div class="split"><i></i></div>
    <section>
      <div class="ptitle d-flex align-items-center justify-content-center">MD Behavior<svg class="ic ic14 pclose"><use href="#xc"/></svg></div>
      <div class="dock behav">
        <div class="dtabs"><div class="dt1">iMD List</div><div class="dt2">Behavior Settings</div><div class="dt3">Data Settings</div></div>
        <div class="charrow d-flex align-items-center"><span>Character:</span><span class="cname me-auto">CC3_Base_Plus</span><span class="sqb"><svg class="ic ic18"><use href="#imp"/></svg></span><span class="sqb ms10"><svg class="ic ic18"><use href="#up"/></svg></span><span class="sqb ms10"><svg class="ic ic18"><use href="#dn"/></svg></span></div>
        <div class="dhead"><div>Main</div><div>iMD File</div><div>Custom</div></div>
        <div class="dempty"></div>
        <span class="sbar s3"></span>
      </div>
    </section>
    <div class="split"><i></i></div>
    <section>
      <div class="ptitle d-flex align-items-center justify-content-center">MD Triggers<svg class="ic ic14 pclose"><use href="#xc"/></svg></div>
      <div class="dock trig">
        <div class="mainch">Main Character:&nbsp; CC3_Base_Plus&nbsp; Mode:</div>
        <div class="camrow d-flex align-items-center"><span>Camera:</span>
          <span class="sqb cfirst"><svg class="ic ic18"><use href="#c0"/></svg></span><span class="sqb"><svg class="ic ic18"><use href="#c1"/></svg></span><span class="sqb"><svg class="ic ic18"><use href="#c2"/></svg></span><span class="sqb"><svg class="ic ic18"><use href="#c3"/></svg></span>
          <span class="sqb cm"><svg class="ic ic18" viewBox="0 0 24 24"><use href="#cn"/><text x="6" y="16" font-size="11" class="fl" font-family="Liberation Sans">1</text></svg></span><span class="sqb"><svg class="ic ic18" viewBox="0 0 24 24"><use href="#cn"/><text x="6" y="16" font-size="11" class="fl" font-family="Liberation Sans">2</text></svg></span><span class="sqb"><svg class="ic ic18" viewBox="0 0 24 24"><use href="#cn"/><text x="6" y="16" font-size="11" class="fl" font-family="Liberation Sans">3</text></svg></span><span class="sqb"><svg class="ic ic18" viewBox="0 0 24 24"><use href="#cn"/><text x="6" y="16" font-size="11" class="fl" font-family="Liberation Sans">4</text></svg></span><span class="sqb"><svg class="ic ic18" viewBox="0 0 24 24"><use href="#cn"/><text x="6" y="16" font-size="11" class="fl" font-family="Liberation Sans">5</text></svg></span>
        </div>
        <div class="filtrow d-flex align-items-center"><span>Filter Data :</span><select class="form-select tsel fsel" aria-label="Filter"><option>All</option></select><span class="sqb tws"><svg class="ic ic18"><use href="#two"/></svg></span><a href="#" class="knw">Know More</a></div>
        <div class="imdcut">iMD</div>
        <span class="sbar s4"></span>
      </div>
    </section>
  </div>

  <div class="cen d-flex flex-column">
    <span class="vdots vd1"></span><span class="vdots vd2"></span>
    <div class="vtop"></div>
    <div class="vport"></div>
    <div class="vband d-flex"><span class="sqb"><svg class="ic ic18"><use href="#qcm"/></svg></span></div>
    <div class="slid">
      <span class="cline"></span><span class="cknob"></span><span class="ctrA"></span><span class="ctrB"></span>
      <span class="crea">Rea</span><span class="ctime">00:00.57</span>
      <svg class="ic ic18 cicA"><use href="#sun"/></svg><svg class="ic ic18 cicB" viewBox="0 0 24 24"><path d="M4 4h16v16H4zM4 10h16M4 15h16M12 12h5"/></svg>
    </div>
  </div>

  <aside class="rcol d-flex">
    <div class="rtabs">
      <div class="rt on">Modify</div><div class="rt">Mini Viewport</div><div class="rt">Render</div><div class="rt anim">Animation Layer - RetargetTest_Mixa...</div>
    </div>
    <div class="rbody">
      <div class="ptitle d-flex align-items-center justify-content-center">Modify<svg class="ic ic14 pclose"><use href="#xc"/></svg></div>
      <div class="rpanel">
        <div class="rtool d-flex"><div class="rtact"><svg class="ic"><use href="#sli"/></svg></div><div class="rtb"><span class="tb"><svg class="ic"><use href="#run"/></svg></span><span class="tb"><svg class="ic"><use href="#chk"/></svg></span><span class="tb"><svg class="ic"><use href="#hd"/></svg></span><span class="tb"><svg class="ic"><use href="#atm"/></svg></span></div></div>
        <div class="rcont">
          <div class="sech"><i></i>Character</div>
          <div class="rrow d-flex align-items-center"><span class="lab r73">Character :</span><input class="form-control fctl" value="CC3_Base_Plus" aria-label="Character"></div>
          <div class="rrow r10 d-flex align-items-center"><span class="lab r49">Mode :</span><button class="btn modeb"><svg class="ic ic14"><use href="#pen"/></svg>Lite Mode</button><button class="btn modeb on"><svg class="ic ic14"><use href="#br"/></svg>Edit Mode</button></div>
          <div class="inforow d-flex align-items-center"><svg class="ic ic16"><use href="#inf"/></svg><span>Wrinkle system is not supported in lite mode.</span></div>
          <div class="ckwrap">
          <label class="ckline d-flex align-items-center"><span class="ckbox"></span>Foot Contact</label>
          <label class="ckline d-flex align-items-center"><span class="ckbox"></span>Hand Contact</label>
          <label class="ckline d-flex align-items-center"><span class="ckbox"><svg class="ic ic16" viewBox="0 0 24 24"><path d="M5 12l5 8L20 2" stroke-width="2"/></svg></span>Hide Inner Mesh</label>
          </div>
          <div class="rrow r3 d-flex align-items-center"><span class="lab r67">Auto-Blink :</span><select class="form-select tsel absel" aria-label="Auto-Blink"><option>None</option></select><span class="lab bsl">Body Scale :</span><div class="spinwrap d-flex align-items-center"><span>100.000</span><div class="spin"><i></i><i></i></div></div></div>
          <div class="hr1"></div>
          <button class="btn bigb"><svg class="ic gp34"><use href="#pos"/></svg>Pose Offset</button>
          <button class="btn bigb mt11"><svg class="ic gp31"><use href="#col"/></svg>Collision Shape</button>
          <div class="sech tall mt15"><i></i>Character Creator</div>
          <button class="btn bigb mt15"><svg class="ic gp16"><use href="#ccr"/></svg>Edit in Character Creator</button>
          <div class="sech mt16"><i></i>Transform</div>
          <div class="gt mt15">Move :</div>
        </div>
        <span class="sbar s5"></span>
      </div>
    </div>
  </aside>
</div>

<section class="bottom">
  <div class="ptitle"><svg class="ic ic14 pclose"><use href="#xc"/></svg></div>
  <div class="btool d-flex align-items-center">
    <span class="b0"></span>
    <span class="tb"><svg class="ic"><use href="#lst2"/></svg></span><span class="vsep"></span>
    <span class="tb grn g3"><svg class="ic"><use href="#t1"/></svg></span><span class="tb grn"><svg class="ic"><use href="#t2"/></svg></span><span class="tb"><svg class="ic"><use href="#t3"/></svg></span><span class="vsep"></span>
    <span class="tb g1"><svg class="ic"><use href="#k1"/></svg></span><span class="tb dim"><svg class="ic"><use href="#k2"/></svg></span><span class="tb"><svg class="ic"><use href="#k3"/></svg></span><span class="tb g2"><svg class="ic"><use href="#k4"/></svg></span><span class="dr"></span><span class="tb"><svg class="ic"><use href="#k5"/></svg></span><span class="tb grn"><svg class="ic"><use href="#k6"/></svg></span><span class="vsep"></span>
    <span class="tb grn g1"><svg class="ic"><use href="#k7"/></svg></span><span class="tb"><svg class="ic"><use href="#k8"/></svg></span><span class="tb"><svg class="ic"><use href="#k9"/></svg></span><span class="vsep"></span>
    <span class="tb grn g2"><svg class="ic"><use href="#m1"/></svg></span><span class="dr"></span><span class="tb"><svg class="ic"><use href="#m2"/></svg></span><span class="tb hlb"><svg class="ic" viewBox="0 0 24 24"><path d="M5 2h15v20H5zM8 18h9M8 15h9"/><text x="7" y="12" font-size="10.500" class="fl" font-family="Liberation Sans">M</text></svg></span>
    <span class="tb dim g5"><svg class="ic"><use href="#m4"/></svg></span><span class="tb"><svg class="ic"><use href="#m5"/></svg></span><span class="tb dim"><svg class="ic"><use href="#m6"/></svg></span><span class="vsep"></span>
    <span class="tb g2"><svg class="ic"><use href="#m7"/></svg></span><span class="tb dim g1"><svg class="ic"><use href="#m8"/></svg></span>
    <span class="tb midg"><svg class="ic"><use href="#nxt"/></svg></span><span class="tb"><svg class="ic"><use href="#lop"/></svg></span><span class="dr"></span>
    <span class="blab g4">Frame :</span><input class="form-control fctl binp ms-2" value="57" aria-label="Frame"><span class="blab ms-2">Speed :</span><select class="form-select tsel bsel ms-2" aria-label="Speed"><option>x1.00</option></select>
    <span class="tb ms-auto me-3"><svg class="ic"><use href="#lsh"/></svg></span>
  </div>
  <div class="ruler">
    <span class="tick">0</span><span class="tick">5</span><span class="tick">10</span><span class="tick">15</span><span class="tick">20</span><span class="tick">25</span><span class="tick">30</span><span class="tick">35</span><span class="tick">40</span><span class="tick">45</span><span class="tick">50</span><span class="tick">55</span><span class="tick"></span><span class="tick"></span><span class="tick"></span><span class="tick"></span><span class="tick"></span><span class="tick"></span><span class="tick"></span><span class="tick">95</span><span class="tick">100</span><span class="tick">105</span><span class="tick">110</span><span class="tick">115</span><span class="tick">120</span><span class="tick">125</span><span class="tick">130</span><span class="tick">135</span><span class="tick">140</span><span class="tick">145</span><span class="tick">150</span><span class="tick">155</span><span class="tick">160</span><span class="tick">165</span><span class="tick">1</span>
    <span class="zero"></span><span class="phead"></span>
  </div>
  <div class="tl d-flex">
    <div class="labs">
      <div class="lr hd"><span class="tr3 tA"></span><span class="t1">Project</span><svg class="ic ic18 lri rA"><use href="#xc"/></svg><svg class="ic ic18 lri rB"><use href="#vc"/></svg><svg class="ic ic18 lri rC"><use href="#key"/></svg></div>
      <div class="lr"><span class="t2">Project</span><svg class="ic ic18 lri rA"><use href="#xc"/></svg></div>
      <div class="lr"><span class="t2">Switcher</span><svg class="ic ic18 lri rA"><use href="#xc"/></svg></div>
      <div class="lr hd"><span class="tr3 tA"></span><span class="t1">CC3_Base_Plus</span><svg class="ic ic18 lri rA"><use href="#xc"/></svg><svg class="ic ic18 lri rB"><use href="#vc"/></svg><svg class="ic ic18 lri rC"><use href="#key"/></svg></div>
      <div class="lr"><span class="t2">Collect Clip</span><svg class="ic ic18 lri rA"><use href="#xc"/></svg></div>
      <div class="lr"><span class="t2">Transform</span><svg class="ic ic18 lri rA"><use href="#xc"/></svg></div>
      <div class="lr mot"><span class="tr3 tB"></span><span class="t2">Motion</span><svg class="ic ic18 lri rA"><use href="#xc"/></svg><svg class="ic ic18 lri rB"><use href="#vc"/></svg><span class="bars"></span></div>
      <div class="lr"><span class="trR tC"></span><span class="t3">Gesture</span><svg class="ic ic18 lri rA"><use href="#xc"/></svg><svg class="ic ic18 lri rB"><use href="#vc"/></svg></div>
      <div class="lr"><span class="trR tC"></span><span class="t3">Motion Layer</span><svg class="ic ic18 lri rA"><use href="#xc"/></svg><svg class="ic ic18 lri rB"><use href="#vc"/></svg></div>
      <div class="lr"><span class="t3">Weight</span><svg class="ic ic18 lri rA"><use href="#xc"/></svg></div>
    </div>
    <div class="tracks">
      <div class="tk l"><span class="mk"></span></div>
      <div class="tk m"></div>
      <div class="tk g"></div>
      <div class="tk l"><span class="mk gm"></span></div>
      <div class="tk m"></div>
      <div class="tk g"><span class="trR tD"></span></div>
      <div class="tk clip"><div class="cinner">RetargetTest_MixamoPreset (100.00%)</div></div>
      <div class="tk ol"></div>
      <div class="tk ol"><span class="mk"></span></div>
      <div class="tk wg"><span class="trR tD"></span></div>
    </div>
    <span class="playl"></span>
  </div>
  <span class="botbar bb1"></span><span class="botbar bb2"></span><span class="sbar s6"></span>
</section>

<ul class="dropdown-menu ctx list-unstyled">
  <li><a class="dropdown-item i26"><svg class="ic ic14 ci"><use href="#co"/></svg>Cut<span class="ks">Ctrl+X</span></a></li>
  <li><a class="dropdown-item i26"><svg class="ic ic14 ci"><use href="#cof"/></svg>Copy<span class="ks">Ctrl+C</span></a></li>
  <li><a class="dropdown-item i26"><svg class="ic ic14 ci"><use href="#pas"/></svg>Paste<span class="ks">Ctrl+V</span></a></li>
  <li><a class="dropdown-item i26"><svg class="ic ic14 ci"><use href="#del"/></svg>Delete<span class="ks">Del</span></a></li>
  <li><hr class="dropdown-divider"></li>
  <li><a class="dropdown-item">Motion Direction Control</a></li>
  <li><a class="dropdown-item">Motion Correction</a></li>
  <li><a class="dropdown-item hi">Motion Modifier<span class="redb"></span></a></li>
  <li><hr class="dropdown-divider"></li>
  <li><a class="dropdown-item">Break</a></li>
  <li><a class="dropdown-item sub">Flatten Motion Clip</a></li>
  <li><a class="dropdown-item sub">Sample Motion Clip to New Layer</a></li>
  <li><a class="dropdown-item">Smooth Motion Clips</a></li>
  <li><a class="dropdown-item sub">Root Motion</a></li>
  <li><a class="dropdown-item off">Merge Clips</a></li>
  <li><hr class="dropdown-divider"></li>
  <li><a class="dropdown-item">Select All Clips / Keys</a></li>
  <li><a class="dropdown-item off sub">Align</a></li>
  <li><a class="dropdown-item off sub">Align Whole Clip</a></li>
  <li><a class="dropdown-item">Align to Previous Motion Layer</a></li>
  <li><a class="dropdown-item">Reset Pivot</a></li>
  <li><a class="dropdown-item">Reverse</a></li>
  <li><a class="dropdown-item">Mirror Clip</a></li>
  <li><a class="dropdown-item">Set Start / End Frame to Current Selection</a></li>
  <li><a class="dropdown-item off">Auto Blend Selected Clip</a></li>
  <li><a class="dropdown-item">Set Speed</a></li>
  <li><hr class="dropdown-divider"></li>
  <li><a class="dropdown-item sub">Remove Motion</a></li>
  <li><hr class="dropdown-divider"></li>
  <li><a class="dropdown-item">Import</a></li>
  <li><a class="dropdown-item">Save Motion Clip</a></li>
  <li><a class="dropdown-item">Rename</a></li>
  <li><a class="dropdown-item">Change Clip Color</a></li>
  <li><hr class="dropdown-divider"></li>
  <li><a class="dropdown-item">Transition Curve</a></li>
  <li><a class="dropdown-item sub">Time Warp</a></li>
  <li><a class="dropdown-item i26"><span class="cvb"><svg viewBox="0 0 16 16" width="16" height="16" fill="none" stroke="currentColor"><path d="M3 13C3 6 6 4 13 3"/><rect x="2" y="11" width="3" height="3" fill="currentColor"/><rect x="11" y="2" width="3" height="2" fill="currentColor"/></svg></span>Curve Editor</a></li>
  <li><a class="dropdown-item">Animation Layer</a></li>
</ul>
</body>
</html>
